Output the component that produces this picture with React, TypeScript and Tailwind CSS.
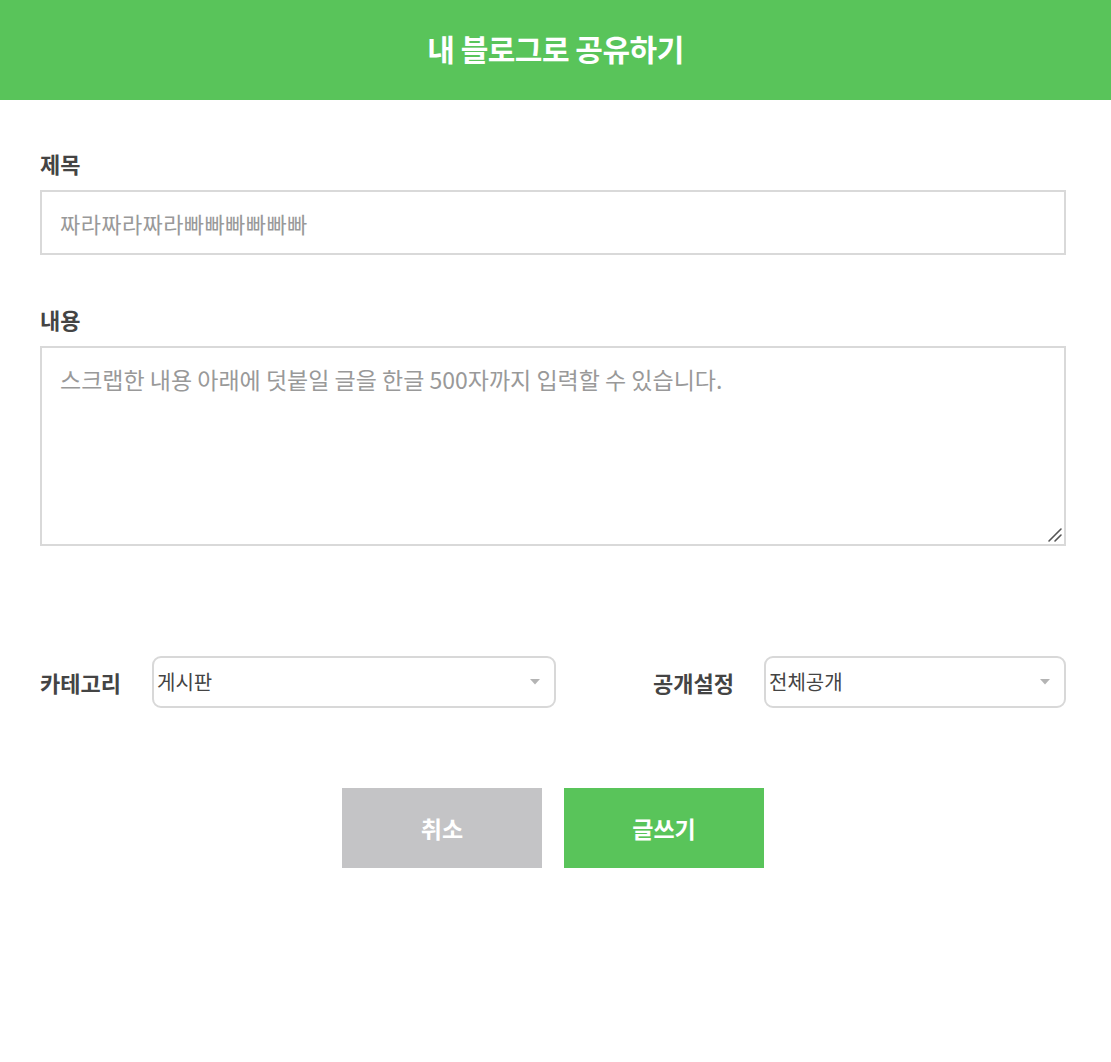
import { useState } from 'react';

const font = { fontFamily: '"Noto Sans CJK KR", "Noto Sans", sans-serif' };

function SelectBox({ value, options, width }: { value: string; options: string[]; width: string }) {
  const [v, setV] = useState(value);
  return (
    <div className={`relative ${width}`}>
      <select
        value={v}
        onChange={e => setV(e.target.value)}
        className="w-full h-[52px] appearance-none rounded-[9px] border-2 border-[#d8d8d8] bg-white pl-[3px] pr-8 text-[20px] text-[#444] outline-none"
        style={font}
      >
        {options.map(o => (
          <option key={o}>{o}</option>
        ))}
      </select>
      {/* 드롭다운 화살표 */}
      <svg className="pointer-events-none absolute right-[16px] top-1/2 -translate-y-1/2" width="10" height="6" viewBox="0 0 10 6">
        <path d="M0 0h10L5 5.5z" fill="#b4b4b4" />
      </svg>
    </div>
  );
}

export default function App() {
  return (
    <main className="min-h-screen bg-white" style={font}>
      {/* Header */}
      <header className="h-[100px] bg-[#59c45a] flex items-center justify-center">
        <h1 className="text-[30px] font-bold text-white tracking-[-0.5px] pb-[4px]">내 블로그로 공유하기</h1>
      </header>

      <section className="px-[40px] pt-[51px]">
        <label className="block text-[22px] leading-[24px] font-bold text-[#444]">제목</label>
        <input
          type="text"
          placeholder="짜라짜라짜라빠빠빠빠빠빠"
          className="mt-[15px] block w-[1026px] h-[65px] border-2 border-[#d9d9d9] px-[18px] text-[22px] tracking-[0.4px] text-[#444] placeholder:text-[#999] outline-none"
          style={font}
        />

        <label className="mt-[52px] block text-[22px] leading-[24px] font-bold text-[#444]">내용</label>
        <div className="relative mt-[15px] w-[1026px]">
          <textarea
            placeholder="스크랩한 내용 아래에 덧붙일 글을 한글 500자까지 입력할 수 있습니다."
            className="block w-full h-[200px] border-2 border-[#d9d9d9] px-[18px] py-[16px] text-[23px] leading-[30px] text-[#444] placeholder:text-[#999] outline-none resize-none"
            style={font}
          />
          {/* 크기조절 핸들 */}
          <svg className="pointer-events-none absolute right-[3px] bottom-[3px]" width="16" height="16" viewBox="0 0 16 16">
            <path d="M2 14L14 2M8 14L14 8" stroke="#555" strokeWidth="1.6" strokeLinecap="round" />
          </svg>
        </div>

        <div className="mt-[110px] flex items-center justify-between w-[1026px]">
          <div className="flex items-center">
            <span className="w-[112px] text-[22px] font-bold text-[#444]">카테고리</span>
            <SelectBox value="게시판" options={['게시판', '일상', '메모']} width="w-[404px]" />
          </div>
          <div className="flex items-center">
            <span className="w-[111px] text-[22px] font-bold text-[#444]">공개설정</span>
            <SelectBox value="전체공개" options={['전체공개', '이웃공개', '비공개']} width="w-[302px]" />
          </div>
        </div>

        <div className="mt-[80px] flex justify-center gap-[22px] pr-[5px]">
          <button className="w-[200px] h-[80px] bg-[#c4c4c6] text-white text-[23px] font-bold">취소</button>
          <button className="w-[200px] h-[80px] bg-[#59c45a] text-white text-[23px] font-bold">글쓰기</button>
        </div>
      </section>
    </main>
  );
}
